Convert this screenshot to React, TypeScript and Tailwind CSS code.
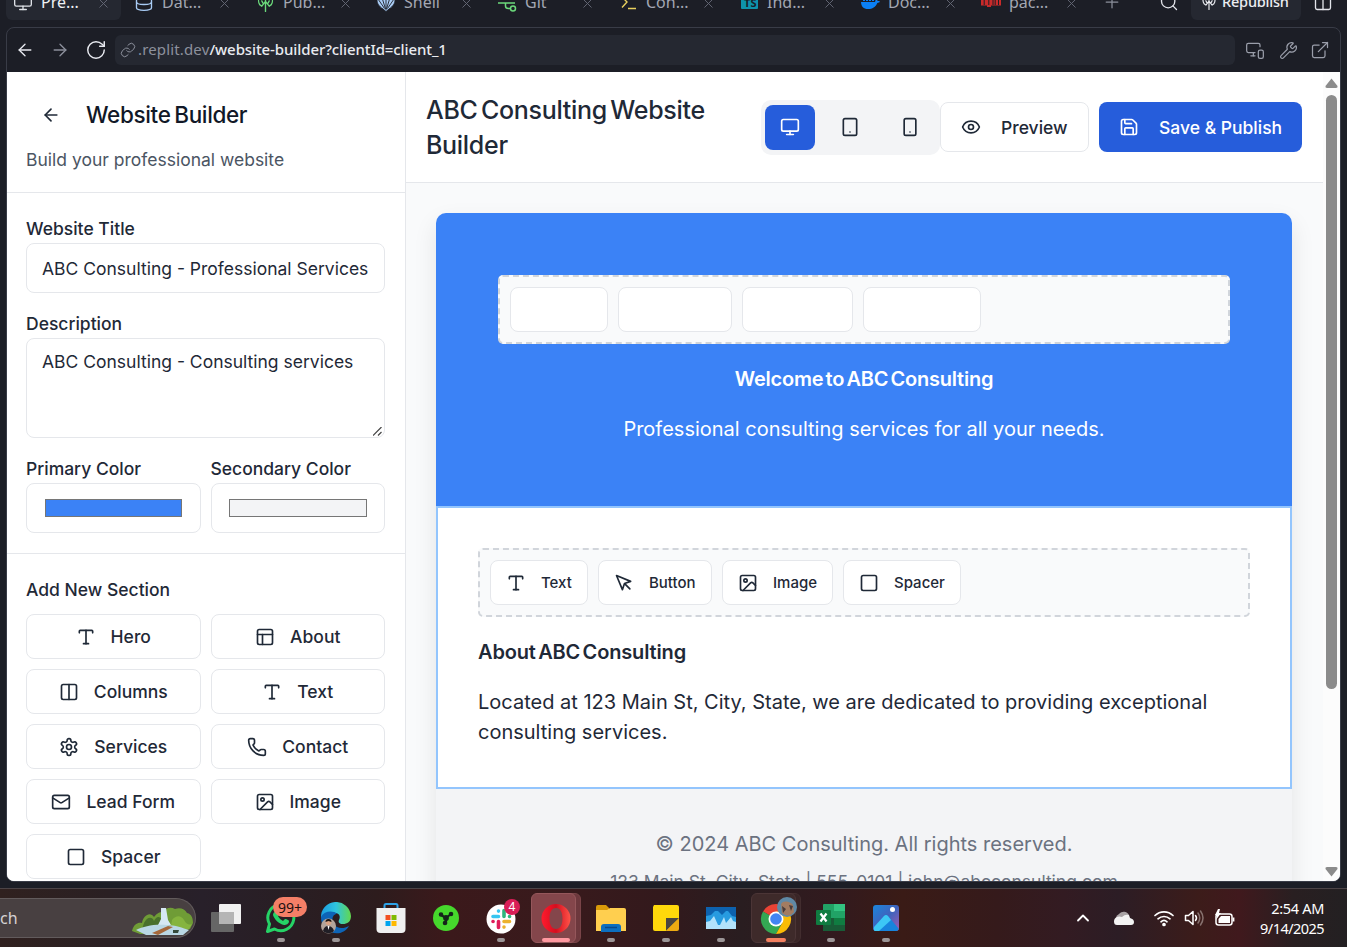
import React from "react";
import {
  ArrowLeft, ArrowRight, RotateCw, Link, MonitorSmartphone, Wrench, ExternalLink, Monitor, Database,
  X, Plus, Search, Columns2, Eye, Save, Tablet, Smartphone, Type, PanelsTopLeft, Phone, Mail, Image, Square, ChevronUp,
} from "lucide-react";

type IconType = React.ComponentType<{ size?: number; strokeWidth?: number; className?: string }>;

const Gear: IconType = ({ size = 20, className }) => (
  <svg width={size} height={size} viewBox="0 0 24 24" fill="none" stroke="currentColor" strokeWidth="2" strokeLinecap="round" strokeLinejoin="round" className={className}>
    <path d="M12.22 2h-.44a2 2 0 0 0-2 2v.18a2 2 0 0 1-1 1.73l-.43.25a2 2 0 0 1-2 0l-.15-.08a2 2 0 0 0-2.73.73l-.22.38a2 2 0 0 0 .73 2.73l.15.1a2 2 0 0 1 1 1.72v.51a2 2 0 0 1-1 1.74l-.15.09a2 2 0 0 0-.73 2.73l.22.38a2 2 0 0 0 2.73.73l.15-.08a2 2 0 0 1 2 0l.43.25a2 2 0 0 1 1 1.73V20a2 2 0 0 0 2 2h.44a2 2 0 0 0 2-2v-.18a2 2 0 0 1 1-1.73l.43-.25a2 2 0 0 1 2 0l.15.08a2 2 0 0 0 2.73-.73l.22-.39a2 2 0 0 0-.73-2.73l-.15-.08a2 2 0 0 1-1-1.74v-.5a2 2 0 0 1 1-1.74l.15-.09a2 2 0 0 0 .73-2.73l-.22-.38a2 2 0 0 0-2.73-.73l-.15.08a2 2 0 0 1-2 0l-.43-.25a2 2 0 0 1-1-1.73V4a2 2 0 0 0-2-2z" />
    <circle cx="12" cy="12" r="3" />
  </svg>
);

const Pointer: IconType = ({ size = 20, className }) => (
  <svg width={size} height={size} viewBox="0 0 24 24" fill="none" stroke="currentColor" strokeWidth="2" strokeLinecap="round" strokeLinejoin="round" className={className}>
    <path d="m3 3 7.07 16.97 2.51-7.39 7.39-2.51L3 3z" />
    <path d="m13 13 6 6" />
  </svg>
);

const Publish = ({ size = 18 }: { size?: number }) => (
  <svg width={size} height={size} viewBox="0 0 18 18" fill="none" stroke="currentColor" strokeWidth="1.3" strokeLinecap="round" strokeLinejoin="round">
    <path d="M9 7v10.500M9 8 5.500 12.500 3.500 11M9 8l3.500 4.500 2-1.500M6.500 9.500 5.500 7.500M11.500 9.500l1-2M3.500 11a6.500 6.500 0 1 1 11 0" />
  </svg>
);
const Shell = () => (
  <svg width="20" height="20" viewBox="0 0 20 20" fill="#a9ccf5" stroke="#1c1e26" strokeWidth="0.9">
    <path d="M10 19.500 7 17C3 14.500 .8 11 1 8 3 5 6 3 10 3s7 2 9 5c.2 3-2 6.500-6 9z" />
    <path d="M10 18 10 3M9.500 17 5.500 4M10.500 17 14.500 4M8.500 16.500 2 7M11.500 16.500 18 7" />
  </svg>
);
const Git = () => (
  <svg width="20" height="20" viewBox="0 0 20 20" fill="none" stroke="#6bd97b" strokeWidth="1.5">
    <path d="M1 11h17M8.500 11v3c0 2 1 2.500 3 2.500h2" />
    <circle cx="16" cy="16.500" r="2.500" />
  </svg>
);
const Prompt = () => (
  <svg width="20" height="20" viewBox="0 0 20 20" fill="none" stroke="#e8d05e" strokeWidth="1.400">
    <path d="m4 5 5 5L4 15.500M10 16.500h8" />
  </svg>
);
const TsBadge = () => (
  <span className="-mt-1 flex h-[18px] w-[17px] shrink-0 items-end justify-end rounded-[1px] bg-[#0e93ac] pr-[1px] text-[11px] leading-[12px] font-bold text-[#17202a]">TS</span>
);
const Docker = () => (
  <svg width="20" height="20" viewBox="0 0 20 20" fill="#0b80f5">
    <path d="M1 10h14c.5-1 .3-2 1-3 1 .6 1.500 1.300 1.600 2 1 0 1.700.1 2.400.5-.6 1-1.600 1.300-2.700 1.400C15.500 15 12.500 17 8 17c-4.500 0-6.800-2.500-7-7zM3 7h2v2H3zm3 0h2v2H6zm3 0h2v2H9zm3 0h2v2h-2z" />
  </svg>
);
const Npm = () => (
  <svg width="20" height="20" viewBox="0 0 20 20" fill="#c92a2a">
    <path d="M0 6h20v7.500H10V15H6v-1.500H0z" />
    <path d="M3.200 8v5M7.800 8v5M12 8v5M14.200 8v5M17.500 8v5" stroke="#1c1e26" strokeWidth="1" />
  </svg>
);

const tabs = [
  { label: "Pre...", icon: <Monitor size={20} strokeWidth={1.6} className="text-[#dfe2e8]" />, active: true },
  { label: "Dat...", icon: <Database size={20} strokeWidth={1.6} className="text-[#a9ccf5]" /> },
  { label: "Pub...", icon: <span className="text-[#6bd97b]"><Publish size={19} /></span> },
  { label: "Shell", icon: <Shell /> },
  { label: "Git", icon: <Git /> },
  { label: "Con...", icon: <Prompt /> },
  { label: "Ind...", icon: <TsBadge /> },
  { label: "Doc...", icon: <Docker /> },
  { label: "pac...", icon: <Npm /> },
];

function TabStrip() {
  return (
    <div className="h-[27px] shrink-0 overflow-hidden font-['Noto_Sans',sans-serif]">
      <div className="-mt-4 flex h-9 items-center">
        <div className="flex w-[1095px] pl-1.5">
          {tabs.map((t) => (
            <div key={t.label} className="w-[121px] shrink-0">
              <div className={"flex h-9 w-[115px] items-center rounded-md pl-[7px] " + (t.active ? "bg-[#252831]" : "")}>
                <span className="flex w-5 justify-center">{t.icon}</span>
                <span className={"ml-2 w-[58px] text-[16px] leading-5 " + (t.active ? "text-[#f0f2f5]" : "text-[#a3a7b3]")}>{t.label}</span>
                <X size={15} strokeWidth={1.5} className="ml-[-3px] text-[#666a77] translate-y-[1px]" />
              </div>
            </div>
          ))}
        </div>
        <Plus size={20} strokeWidth={1.5} className="ml-[7px] shrink-0 text-[#8b8f9b]" />
        <Search size={20} strokeWidth={1.6} className="ml-[37px] shrink-0 text-[#e2e4ea]" />
        <div className="ml-[12px] flex h-9 w-[110px] shrink-0 items-center rounded-md bg-[#252831] pl-[10px] text-[#eceef2]">
          <Publish size={16} />
          <span className="ml-[5px] text-[14.500px] font-medium tracking-[-0.2px]">Republish</span>
        </div>
        <Columns2 size={20} strokeWidth={1.6} className="ml-[12px] shrink-0 text-[#e2e4ea]" />
      </div>
    </div>
  );
}

function AddressBar() {
  return (
    <div className="flex h-11 shrink-0 items-center text-[#e6e8ee]">
      <ArrowLeft size={20} strokeWidth={1.6} className="ml-[8px]" />
      <ArrowRight size={20} strokeWidth={1.6} className="ml-[15px] text-[#8b8f9b]" />
      <RotateCw size={22} strokeWidth={1.6} className="ml-[15px]" />
      <div className="ml-[8px] flex h-[30px] w-[1120px] items-center rounded-md bg-[#252831] pl-[5px] font-['Noto_Sans',sans-serif] text-[15px] text-[#8d919d]">
        <Link size={16} strokeWidth={1.5} />
        <span className="ml-0.5 -mt-px tracking-[0.15px]">.replit.dev</span>
        <span className="-mt-px font-medium tracking-[-0.1px] text-[#e9ebf0]">/website-builder?clientId=client_1</span>
      </div>
      <MonitorSmartphone size={20} strokeWidth={1.5} className="ml-[10px] text-[#9a9eaa]" />
      <Wrench size={19} strokeWidth={1.5} className="ml-[14px] text-[#9a9eaa]" />
      <ExternalLink size={20} strokeWidth={1.5} className="ml-[12px] text-[#9a9eaa]" />
    </div>
  );
}

const sections: { label: string; Icon: IconType }[] = [
  { label: "Hero", Icon: Type },
  { label: "About", Icon: PanelsTopLeft },
  { label: "Columns", Icon: Columns2 },
  { label: "Text", Icon: Type },
  { label: "Services", Icon: Gear },
  { label: "Contact", Icon: Phone },
  { label: "Lead Form", Icon: Mail },
  { label: "Image", Icon: Image },
  { label: "Spacer", Icon: Square },
];

function Sidebar() {
  return (
    <aside className="h-full w-[399px] shrink-0 overflow-hidden border-r border-[#e5e7eb] bg-white text-[17.500px] leading-[25px]">
      <div className="h-[121px] border-b border-[#e5e7eb] px-[19px] pt-5">
        <div className="flex h-[45px] items-center">
          <ArrowLeft size={20} className="ml-[15px]" />
          <h1 className="ml-[25px] text-[22.500px] font-medium tracking-[-0.35px] [word-spacing:-2px] text-[#111827]">Website Builder</h1>
        </div>
        <p className="mt-[10px] text-[#4b5563]">Build your professional website</p>
      </div>
      <div className="h-[361px] border-b border-[#e5e7eb] px-[19px] pt-[23px] pr-5 font-medium">
        <div>Website Title</div>
        <div className="mt-0.5 flex h-[50px] items-center rounded-lg border border-[#e5e7eb] px-[15px] font-normal whitespace-nowrap">ABC Consulting - Professional Services</div>
        <div className="mt-[18px]">Description</div>
        <div className="relative mt-0.5 h-[100px] rounded-lg border border-[#e5e7eb] px-[15px] pt-[10px] font-normal">
          ABC Consulting - Consulting services
          <svg className="absolute right-[2px] bottom-[1px]" width="9" height="9" viewBox="0 0 9 9" stroke="#444" strokeWidth="1.2"><path d="M0 8.500 8.500 0M5 8.500 8.500 5" /></svg>
        </div>
        <div className="mt-[18px] grid grid-cols-2 gap-x-2.5">
          <div>
            <div>Primary Color</div>
            <div className="mt-0.5 h-[50px] rounded-lg border border-[#e5e7eb] px-[18px] py-[15px]"><div className="h-[18px] border border-[#767676] bg-[#3b82f6]" /></div>
          </div>
          <div>
            <div>Secondary Color</div>
            <div className="mt-0.5 h-[50px] rounded-lg border border-[#e5e7eb] px-[17px] py-[15px]"><div className="h-[18px] border border-[#767676] bg-[#f3f4f6]" /></div>
          </div>
        </div>
      </div>
      <div className="pt-[23px] pr-5 pl-[19px] font-medium">
        <div>Add New Section</div>
        <div className="mt-3 grid grid-cols-2 gap-2.5">
          {sections.map(({ label, Icon }) => (
            <div key={label} className="flex h-[45px] items-center justify-center gap-[15px] rounded-lg border border-[#e5e7eb]">
              <Icon size={20} />
              <span>{label}</span>
            </div>
          ))}
        </div>
      </div>
    </aside>
  );
}

const tools: { label: string; Icon: IconType; cls: string }[] = [
  { label: "Text", Icon: Type, cls: "w-[98px]" },
  { label: "Button", Icon: Pointer, cls: "w-[114px]" },
  { label: "Image", Icon: Image, cls: "w-[111px]" },
  { label: "Spacer", Icon: Square, cls: "w-[118px]" },
];

function ElementBar({ blank }: { blank?: boolean }) {
  return (
    <div className="flex h-[69px] gap-2.5 rounded-[5px] border-2 border-dashed border-[#d1d5db] bg-[#f9fafb] p-[10px]">
      {tools.map(({ label, Icon, cls }) => (
        <div key={label} className={"flex h-[45px] shrink-0 items-center gap-[15px] rounded-lg border border-[#e5e7eb] bg-white pl-[15px] text-[15px] font-medium " + cls}>
          {!blank && <Icon size={20} />}
          {!blank && <span className="pt-0.5">{label}</span>}
        </div>
      ))}
    </div>
  );
}

function Editor() {
  return (
    <main className="flex h-full w-[917px] shrink-0 flex-col bg-[#f9fafb]">
      <header className="flex h-[111px] shrink-0 items-center border-b border-[#e5e7eb] bg-white pl-5">
        <h2 className="w-[335px] pt-0.5 pr-6 text-[25px] leading-[35px] font-medium tracking-[-0.3px] [word-spacing:-3px] text-[#1f2937]">ABC Consulting Website Builder</h2>
        <div className="flex h-[55px] w-[179px] items-center gap-2.5 rounded-[10px] bg-[#f3f4f6] pl-1">
          <div className="flex h-[45px] w-[50px] items-center justify-center rounded-lg bg-[#265ddb] text-white"><Monitor size={20} /></div>
          <div className="flex w-[50px] justify-center"><Tablet size={20} /></div>
          <div className="flex w-[50px] justify-center"><Smartphone size={20} /></div>
        </div>
        <div className="flex h-[50px] w-[149px] items-center rounded-lg border border-[#e5e7eb] pl-5 text-[17.500px] font-medium">
          <Eye size={20} /><span className="ml-5 pt-0.5">Preview</span>
        </div>
        <div className="ml-2.5 flex h-[50px] w-[203px] items-center rounded-lg bg-[#265ddb] pl-5 text-[17.500px] font-medium whitespace-nowrap text-white">
          <Save size={20} /><span className="ml-5 pt-0.5">Save &amp; Publish</span>
        </div>
      </header>
      <div className="min-h-0 flex-1 overflow-hidden pt-[30px] pl-[30px]">
        <div className="h-[900px] w-[856px] overflow-visible rounded-[10px] bg-[#f3f4f6] shadow-[0_10px_25px_rgba(0,0,0,0.09)]">
          <section className="h-[293px] rounded-t-[10px] bg-[#3b82f6] px-[62px] pt-[62px] text-center text-white">
            <div className="text-left"><ElementBar blank /></div>
            <h3 className="mt-5 text-[20px] leading-[30px] font-semibold tracking-[-0.23px] [word-spacing:-2.5px]">Welcome to ABC Consulting</h3>
            <p className="mt-5 text-[20px] leading-[30px]">Professional consulting services for all your needs.</p>
          </section>
          <section className="h-[283px] border-2 border-[#93c5fd] bg-white px-10 pt-10">
            <ElementBar />
            <h3 className="mt-5 text-[20px] leading-[30px] font-semibold tracking-[-0.15px] [word-spacing:-2.5px]">About ABC Consulting</h3>
            <p className="mt-5 text-[20px] leading-[30px]">Located at 123 Main St, City, State, we are dedicated to providing exceptional consulting services.</p>
          </section>
          <footer className="pt-10 text-center text-[#6b7280]">
            <p className="text-[20px] leading-[30px]">© 2024 ABC Consulting. All rights reserved.</p>
            <p className="mt-2.5 text-[17.500px] leading-[25px]">123 Main St, City, State | 555-0101 | john@abcconsulting.com</p>
          </footer>
        </div>
      </div>
    </main>
  );
}

function Scrollbar() {
  return (
    <div className="flex w-[17px] flex-col items-center bg-[#fcfcfc]">
      <svg className="mt-[6px] shrink-0" width="13" height="10" viewBox="0 0 13 10" fill="#8b8b8b"><path d="M6.500.5 12.500 8q.5 2-1.500 2H2Q0 10 .5 8z" /></svg>
      <div className="mt-[7px] h-[594px] w-[11px] shrink-0 rounded-full bg-[#8b8b8b]" />
      <svg className="mt-auto mb-1 shrink-0" width="13" height="10" viewBox="0 0 13 10" fill="#8b8b8b"><path d="M6.500 9.500.5 2Q0 0 2 0h9q2 0 1.500 2z" /></svg>
    </div>
  );
}

const Landscape = () => (
  <svg width="64" height="28" viewBox="0 0 64 28">
    <path d="M2 24C4 16 9 15 12 16c1-7 8-12 12-6 3-4 6-5 8-5 5-5 9-5 13-3 5-2 10 0 12 4 5 1 6 6 6 10l-3 6-12 5H10z" fill="#6f9c36" />
    <path d="M14 16c3-6 8-7 10-2 3-6 7-5 8 1l-2 7H12z" fill="#49702c" />
    <path d="M42 13c4-5 9-5 12 0s5 5 8 4l-3 5-19 2z" fill="#85b43e" />
    <path d="M31 1h5l2 12 3 5H28l3-6z" fill="#d6e8f3" />
    <path d="M6 23c8-4 18-6 31-5 8 0 16 3 22 5l-6 5H16z" fill="#b9d7e4" />
    <path d="m22 26 16-7 5 1-15 8z" fill="#a5683b" /><path d="M43 23h6l-1 3h-5z" fill="#354a3b" />
  </svg>
);
const TaskView = () => (
  <svg width="32" height="32" viewBox="0 0 32 32"><rect x="9" y="2" width="22" height="20" rx="1" fill="#f1f1f1" /><rect x="1" y="10" width="23" height="20" rx="1" fill="#666" /><path d="M9 10h15v12H9z" fill="#b5b5b5" /></svg>
);
const WhatsApp = () => (
  <svg width="32" height="32" viewBox="0 0 32 32"><path d="M2.500 29.500 4.500 22a13 13 0 1 1 5 5z" fill="none" stroke="#25d366" strokeWidth="3" strokeLinejoin="round" /><path d="M11 9c2-1 3 2 3 3l-1 2c1 2 3 4 5 5l2-2c1 0 4 1 4 2 0 3-3 4-5 4-5-1-10-6-11-10 0-2 1-3 3-4z" fill="#25d366" /></svg>
);
const Edge = () => (
  <svg width="32" height="32" viewBox="0 0 32 32">
    <defs><linearGradient id="eg" x1="0" x2="1"><stop stopColor="#1b9de2" /><stop offset=".5" stopColor="#2fc4df" /><stop offset="1" stopColor="#62d84e" /></linearGradient></defs>
    <path d="M1 16a15 15 0 0 1 30-2c0 6-4 8-8 8-4 0-5-2-4-4 3-7-4-8-8-7C5 12 2 14 1 16z" fill="url(#eg)" />
    <path d="M1 15c3-6 12-7 16-3-6 0-6 10 0 13 4 2 8 1 12-1-4 7-12 9-18 6C4 28 1 22 1 15z" fill="#0d64b7" />
    <circle cx="8.500" cy="24" r="7.500" fill="#b3a49b" /><path d="M3 29c1-4 3-5 5-5s5 1 6 5c-3 3-8 3-11 0z" fill="#201e26" /><circle cx="8.500" cy="20.500" r="2.800" fill="#d9a384" /><path d="M5.500 20a3 3 0 0 1 6 0l-3-1z" fill="#1c1715" /><path d="m7.500 24 1 4 1-4z" fill="#fff" />
  </svg>
);
const Store = () => (
  <svg width="32" height="32" viewBox="0 0 32 32"><path d="M9.500 7V3.500q0-1.500 1.500-1.500h10q1.500 0 1.500 1.500V7" fill="none" stroke="#2ea3e8" strokeWidth="2" /><path d="M1.500 6h29v21q0 4-4 4h-21q-4 0-4-4z" fill="#f0f0f0" /><path d="M10.500 13h5v5h-5z" fill="#f25022" /><path d="M16.500 13h5v5h-5z" fill="#7fba00" /><path d="M10.500 19h5v5h-5z" fill="#00a4ef" /><path d="M16.500 19h5v5h-5z" fill="#ffb900" /></svg>
);
const GreenApp = () => (
  <svg width="32" height="32" viewBox="0 0 32 32"><circle cx="16" cy="16" r="13" fill="#46d82c" /><g stroke="#15251a" strokeWidth="2.200" fill="#15251a"><path d="m16 16-5-3M16 16l5-4M16 16v6" /><circle cx="11" cy="12.500" r="1.200" /><circle cx="21" cy="12" r="1.200" /><circle cx="15" cy="21" r="1.200" /><circle cx="16" cy="16" r="1.800" /></g></svg>
);
const Slack = () => (
  <svg width="32" height="32" viewBox="0 0 32 32" strokeWidth="3.600" strokeLinecap="round"><circle cx="16" cy="17" r="14.500" fill="#fff" /><path d="M8 14.500h5.500M13.500 9v.1" stroke="#36c5f0" /><path d="M19 8.500v6M24.500 14.500h.1" stroke="#2eb67d" /><path d="M13.500 19.500v6M8 19.500h.1" stroke="#e01e5a" /><path d="M19 19.500h5.500M19 25v.1" stroke="#ecb22e" /></svg>
);
const Opera = () => (
  <svg width="32" height="32" viewBox="0 0 32 32"><defs><linearGradient id="og" x1="0" x2="1"><stop stopColor="#ff1b2d" /><stop offset=".5" stopColor="#d50e1f" /><stop offset="1" stopColor="#ff5449" /></linearGradient></defs><path fillRule="evenodd" d="M16 2a14.500 14.500 0 1 0 0 29 14.500 14.500 0 1 0 0-29zm0 4c4 0 6.500 4 6.500 10.500S20 27 16 27s-6.500-4-6.500-10.500S12 6 16 6z" fill="url(#og)" /></svg>
);
const Folder = () => (
  <svg width="32" height="32" viewBox="0 0 32 32"><path d="M1 5q0-2 2-2h8l3 3v6H1z" fill="#d99a09" /><path d="M1 8h11l3-2h14q2 0 2 2v21H1z" fill="#ffcf4f" /><path d="M6 30v-5q0-3 3-3h14q3 0 3 3v5z" fill="#0c6fc0" /><path d="M10 25.500h12" stroke="#08488a" strokeWidth="1.500" /></svg>
);
const Notes = () => (
  <svg width="32" height="32" viewBox="0 0 32 32"><path d="M4 3h23q2 0 2 2v11L17 29H5q-2 0-2-2V5z" fill="#ffd80b" /><path d="M16 16h13L16 29z" fill="#4a4640" /><path d="m29 16-13 13h11q2 0 2-2z" fill="#edaa12" /></svg>
);
const Monitoring = () => (
  <svg width="32" height="32" viewBox="0 0 32 32"><path d="M1 5h30v22H1z" fill="#0d62ae" /><path d="m1 14 5-1 4-4h3l4 4 4-4h2l4 5 4 1v12H1z" fill="#279be0" /><path d="M1 27v-7l4-1 4-5 4 9h2l4-8 2 6 5-6 2 4 3 1v7z" fill="#b2e2fb" /></svg>
);
const Chrome = () => (
  <svg width="32" height="32" viewBox="0 0 32 32"><path d="M16 17 3 9.500A15 15 0 0 1 29 9.500z" fill="#e94335" /><path d="M3 9.500A15 15 0 0 0 16 32l6.500-11.500L16 17z" fill="#34a853" /><path d="M29 9.500H16V17l6.500 3.500L16 32A15 15 0 0 0 29 9.500z" fill="#fbbc05" /><circle cx="16" cy="17" r="7.500" fill="#fff" /><circle cx="16" cy="17" r="5.800" fill="#4285f4" /></svg>
);
const Excel = () => (
  <svg width="32" height="32" viewBox="0 0 32 32"><path d="M8 3q0-1 1-1h10v14H8z" fill="#21a366" /><path d="M19 2h11v7H19z" fill="#33c481" /><path d="M19 9h11v7H19z" fill="#21a366" /><path d="M8 16h11v13H8z" fill="#185c37" /><path d="M19 16h11v7H19z" fill="#107c41" /><path d="M19 23h11v6H8v-4h11z" fill="#185c37" /><rect x="1" y="8" width="15" height="15" rx="1" fill="#107c41" /><path d="m5.500 11.500 6 8M11.500 11.500l-6 8" stroke="#fff" strokeWidth="2.200" /></svg>
);
const Photos = () => (
  <svg width="32" height="32" viewBox="0 0 32 32"><defs><linearGradient id="pg" x1="0" x2="1" y2="1"><stop stopColor="#1a86dc" /><stop offset=".5" stopColor="#3f63bd" /><stop offset="1" stopColor="#a25bb0" /></linearGradient></defs><rect x="3" y="3" width="26" height="26" rx="3" fill="url(#pg)" /><path d="M4 28 14 14q2-2 4 0l11 13-2 2H5z" fill="#1784dc" /><path d="m4 25 10-11q2-2 4 0l3 4-12 11H5q-2-1-1-4z" fill="#3cc8f5" /><circle cx="22.500" cy="7.500" r="2.500" fill="#fff" /></svg>
);

const apps: { Icon: React.ComponentType; mark?: string; tile?: string; badge?: React.ReactNode }[] = [
  { Icon: TaskView },
  { Icon: WhatsApp, mark: "w-2 bg-[#9b9596]", badge: <span className="absolute top-[8px] left-[20px] flex h-5 w-[34px] items-center justify-center rounded-full bg-[#f47f67] text-[14px] text-[#201010]">99+</span> },
  { Icon: Edge, mark: "w-2 bg-[#9b9596]" },
  { Icon: Store },
  { Icon: GreenApp },
  { Icon: Slack, mark: "w-2 bg-[#9b9596]", badge: <span className="absolute top-[10px] left-[31px] flex h-4 w-4 items-center justify-center rounded-full bg-[#d91e57] text-[12px] text-white">4</span> },
  { Icon: Opera, mark: "w-7 bg-[#ff98a0]", tile: "bg-[#84464b] border-[#95575b]" },
  { Icon: Folder, mark: "w-2 bg-[#9b9596]" },
  { Icon: Notes, mark: "w-2 bg-[#9b9596]" },
  { Icon: Monitoring, mark: "w-2 bg-[#9b9596]" },
  { Icon: Chrome, mark: "w-5 bg-[#f47f5f]", tile: "bg-[#3e2a2a] border-[#4b3536]", badge: <svg className="absolute top-[8px] left-[29px]" width="20" height="20" viewBox="0 0 20 20"><circle cx="10" cy="10" r="10" fill="#5f89a6" /><path d="M4 7c2-4 9-3 12 1l1 7c-4 5-9 4-12 1z" fill="#a37c61" /><path d="m5 9 4 3-3 4zM12 8l4 1-2 5z" fill="#493c3a" /></svg> },
  { Icon: Excel, mark: "w-2 bg-[#9b9596]" },
  { Icon: Photos, mark: "w-2 bg-[#9b9596]" },
];

function Taskbar() {
  return (
    <div className="flex h-[59px] shrink-0 overflow-hidden border-t border-[#4c4447] bg-[linear-gradient(90deg,#30211f_0%,#2a2023_8%,#28202a_15%,#291e23_22%,#2d1c1d_28%,#3b191b_33%,#381a1c_42%,#33191c_49%,#291d20_55%,#321a1e_62%,#3a1b16_67%,#351a1b_74%,#331b22_79%,#2c1d25_83%,#3c1c1a_89%,#40191d_92%,#291f21_96%,#232022_100%)] font-['Noto_Sans',sans-serif] text-white">
      <div className="mt-[9px] flex h-10 w-[196px] shrink-0 items-center overflow-hidden rounded-r-full border border-l-0 border-[#625b5c] bg-[#484041]">
        <span className="w-[130px] text-[16px] text-[#d5d2d2]">ch</span>
        <span className="mt-[6px]"><Landscape /></span>
      </div>
      <div className="ml-[2px] flex">
        {apps.map(({ Icon, mark, tile, badge }, i) => (
          <div key={i} className="relative flex h-[58px] w-[55px] shrink-0 flex-col items-center pt-[4px]">
            {tile && <div className={"absolute top-[4px] left-[8px] h-[50px] w-[45px] rounded-md border opacity-70 " + tile} />}
            {tile && <div className={"absolute top-[4px] left-[3px] h-[50px] w-[45px] rounded-md border " + tile} />}
            <div className="relative mt-[9px] h-8"><Icon /></div>
            {mark && <div className={"relative mt-1 h-1 rounded-full " + mark} />}
            {badge}
          </div>
        ))}
      </div>
      <div className="flex h-[58px] flex-1 items-center justify-end pr-[23px]">
        <ChevronUp size={20} strokeWidth={2.2} className="mr-[20px]" />
        <svg width="22" height="15" viewBox="0 0 22 15" className="mr-[18px]"><path d="M3 8a6 5 0 0 1 3-5 6 6 0 0 1 10 1l-7 4z" fill="#a9a3a5" /><path d="M4 6q2-1 5 0 3-3 7-2l1 3q4 1 4 4 0 3-3 3H4q-3 0-3-3.500T4 6z" fill="#f3f3f3" /></svg>
        <svg width="22" height="18" viewBox="0 0 22 18" fill="none" stroke="#fff" strokeWidth="1.700" strokeLinecap="round" className="mr-[9px]"><path d="M2 6.500a13 13 0 0 1 18 0M5 9.800a9 9 0 0 1 12 0M8 12.800a4.500 4.500 0 0 1 6 0" /><circle cx="11" cy="15.500" r="1" fill="#fff" /></svg>
        <svg width="21" height="18" viewBox="0 0 21 18" fill="none" stroke="#fff" strokeWidth="1.500" strokeLinejoin="round" strokeLinecap="round" className="mr-[9px]"><path d="M1.500 6.500h3L9 2.500v13l-4.500-4h-3z" /><path d="M11.500 6.500q2 2.500 0 5" /><path d="M14 4q3.500 5 0 10M16.500 2q5 7 0 14" stroke="#87716e" /></svg>
        <svg width="21" height="18" viewBox="0 0 21 18" className="mr-[19px]"><rect x="2" y="5" width="16" height="11" rx="2.500" fill="none" stroke="#fff" strokeWidth="1.500" /><path d="M7 7h9v7H4.500v-4z" fill="#fff" /><path d="M19.500 8.500v4" stroke="#fff" strokeWidth="1.800" /><path d="M4 0 1 6h2l-1 5 5-7H5l1-4z" fill="#fff" /></svg>
        <div className="w-[70px] text-right text-[14.500px] leading-5 tracking-[-0.55px] whitespace-nowrap">
          <div className="tracking-[-0.3px]">2:54 AM</div>
          <div>9/14/2025</div>
        </div>
      </div>
    </div>
  );
}

export default function App() {
  return (
    <div className="flex h-[947px] w-[1347px] flex-col overflow-hidden bg-[#1c1e26] font-['Inter',sans-serif] text-[#1f2937]">
      <TabStrip />
      <div className="ml-[6px] flex h-[855px] w-[1335px] shrink-0 flex-col overflow-hidden rounded-lg border border-[#393c47]">
        <AddressBar />
        <div className="flex min-h-0 flex-1 bg-white">
          <Sidebar />
          <Editor />
          <Scrollbar />
        </div>
      </div>
      <div className="h-[6px] shrink-0" />
      <Taskbar />
    </div>
  );
}
